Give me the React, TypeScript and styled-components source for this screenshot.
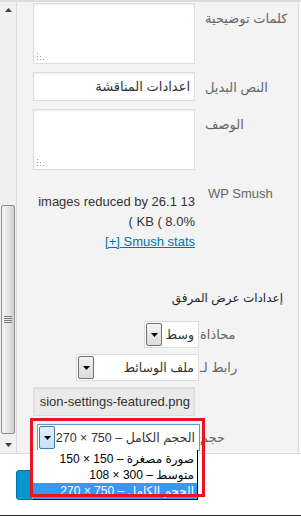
import React from 'react';
import styled, { createGlobalStyle } from 'styled-components';

const GlobalStyle = createGlobalStyle`
  html, body {
    margin: 0;
    padding: 0;
    background: #fff;
  }
  body {
    font-family: "Liberation Sans", "DejaVu Sans", sans-serif;
    font-size: 13px;
    color: #333;
  }
`;

const Frame = styled.div`
  position: relative;
  width: 301px;
  height: 516px;
  box-sizing: border-box;
  border-top: 2px solid #dcdcdc;
  border-bottom: 1px solid #2b2b2b;
  display: flex;
  flex-direction: column;
  overflow: hidden;
  background: #fff;
`;

const Workspace = styled.div`
  display: flex;
  height: 451px;
`;

const ScrollBar = styled.div`
  width: 16px;
  border-right: 1px solid #d9d9d9;
  background: #f0f0f0;
  display: flex;
  flex-direction: column;
  align-items: center;
`;

const ScrollArrow = styled.div`
  height: 16px;
  width: 16px;
  display: flex;
  align-items: center;
  justify-content: center;
`;

const Thumb = styled.div`
  margin-top: 187px;
  width: 14px;
  height: 229px;
  box-sizing: border-box;
  border: 1px solid #8e8f8f;
  border-radius: 2px;
  background: linear-gradient(to right, #f4f4f4 0%, #e6e6e6 50%, #cfcfcf 100%);
  display: flex;
  align-items: center;
  justify-content: center;
`;

const Spacer = styled.div`
  flex: 1;
`;

const Panel = styled.div`
  width: 282px;
  box-sizing: border-box;
  background: #f3f3f3;
  border-right: 1px solid #dcdcdc;
  padding: 1px 8px 0 16px;
  direction: rtl;
`;

const Setting = styled.div<{ $top: number; $center?: boolean }>`
  display: grid;
  grid-template-columns: 95px 162px;
  align-items: ${(p) => (p.$center ? 'center' : 'start')};
  margin-top: ${(p) => p.$top}px;
`;

const Name = styled.div<{ $pad: number; $padTop?: number; $ltr?: boolean }>`
  direction: ${(p) => (p.$ltr ? 'ltr' : 'rtl')};
  text-align: left;
  padding-left: ${(p) => p.$pad}px;
  padding-top: ${(p) => p.$padTop ?? 0}px;
  line-height: 16px;
  color: #666;
  white-space: nowrap;
`;

const TextArea = styled.div`
  position: relative;
  height: 61px;
  box-sizing: border-box;
  background: #fff;
  border: 1px solid #ddd;
  box-shadow: inset 0 1px 2px rgba(0, 0, 0, 0.07);
`;

const Grip = styled.svg`
  position: absolute;
  left: 3px;
  bottom: 2px;
`;

const TextInput = styled.div<{ $readOnly?: boolean }>`
  height: 29px;
  box-sizing: border-box;
  border: 1px solid #ddd;
  background: ${(p) => (p.$readOnly ? '#eaeaea' : '#fff')};
  box-shadow: inset 0 1px 2px rgba(0, 0, 0, 0.07);
  padding: 0 4px 0 8px;
  line-height: 27px;
  color: #333;
  white-space: nowrap;
  overflow: hidden;
`;

const LtrText = styled.span`
  direction: ltr;
  unicode-bidi: embed;
`;

const SmushValue = styled.div`
  padding-top: 14px;
  text-align: right;
  line-height: 20px;
  color: #333;
`;

const Line = styled.div`
  direction: ltr;
  text-align: right;
  white-space: nowrap;
`;

const StatsLink = styled.a`
  color: #0073aa;
  text-decoration: underline;
`;

const SectionTitle = styled.h2`
  margin: 38px 7px 0 0;
  font-size: 12px;
  font-weight: normal;
  line-height: 16px;
  color: #23282d;
`;

const SelectBox = styled.div<{ $width: number; $focused?: boolean }>`
  position: relative;
  justify-self: start;
  margin-inline-start: ${(p) => (p.$focused ? -5 : -4)}px;
  width: ${(p) => p.$width}px;
  height: 27px;
  box-sizing: border-box;
  display: flex;
  align-items: center;
  background: #fff;
  border: 1px solid ${(p) => (p.$focused ? '#5b9dd9' : '#ddd')};
  padding: 1px;
`;

const SelectText = styled.span`
  flex: 1;
  overflow: hidden;
  white-space: nowrap;
  padding-right: 3px;
  font-size: 12.5px;
  color: #333;
`;

const ArrowButton = styled.span<{ $focused?: boolean }>`
  width: 16px;
  height: 23px;
  box-sizing: border-box;
  flex: none;
  display: flex;
  align-items: center;
  justify-content: center;
  border: 1px solid ${(p) => (p.$focused ? '#3c7fb1' : '#707070')};
  border-radius: 2px;
  background: ${(p) =>
    p.$focused
      ? 'linear-gradient(#e5f1fb, #c4e0f7)'
      : 'linear-gradient(#f2f2f2, #dcdcdc)'};
`;

const DropList = styled.div`
  position: absolute;
  top: 100%;
  right: 1px;
  width: 166px;
  box-sizing: border-box;
  padding-top: 1px;
  background: #fff;
  border-left: 1px solid #999;
  border-right: 1px solid #000;
  border-bottom: 1px solid #000;
  z-index: 2;
`;

const Option = styled.div<{ $selected?: boolean }>`
  height: 16px;
  line-height: 16px;
  padding-right: 3px;
  font-size: 12px;
  text-align: right;
  white-space: nowrap;
  background: ${(p) => (p.$selected ? '#3399ff' : 'transparent')};
  color: ${(p) => (p.$selected ? '#fff' : '#000')};
`;

const Gutter = styled.div`
  flex: 1;
  background: #fafafa;
`;

const Footer = styled.div`
  flex: 1;
  border-top: 1px solid #dcdcdc;
  padding: 16px 0 0 16px;
`;

const PrimaryButton = styled.div`
  width: 70px;
  height: 30px;
  box-sizing: border-box;
  background: #0096cf;
  border: 1px solid #0073aa;
  border-radius: 3px;
`;

const Annotation = styled.div`
  position: absolute;
  left: 30px;
  top: 416px;
  width: 175px;
  height: 79px;
  box-sizing: border-box;
  border: 3px solid #e8141f;
  z-index: 3;
  pointer-events: none;
`;

const Triangle: React.FC<{ up?: boolean; color?: string }> = ({ up, color = '#000' }) => (
  <svg width="7" height="4" viewBox="0 0 7 4">
    <path d={up ? 'M0 4 L7 4 L3.5 0 Z' : 'M0 0 L7 0 L3.5 4 Z'} fill={color} />
  </svg>
);

const Select: React.FC<{ width: number; value: string; focused?: boolean; children?: React.ReactNode }> = ({
  width,
  value,
  focused,
  children,
}) => (
  <SelectBox $width={width} $focused={focused}>
    <SelectText>{value}</SelectText>
    <ArrowButton $focused={focused}>
      <Triangle />
    </ArrowButton>
    {children}
  </SelectBox>
);

const ResizeGrip = () => (
  <Grip width="8" height="8" viewBox="0 0 8 8">
    {[
      [1, 1],
      [1, 4],
      [4, 4],
      [1, 7],
      [4, 7],
      [7, 7],
    ].map(([x, y]) => (
      <rect key={`${x}-${y}`} x={x - 1} y={y - 1} width="1" height="1" fill="#9a9a9a" />
    ))}
  </Grip>
);

const sizes = [
  { label: 'صورة مصغرة – 150 × 150' },
  { label: 'متوسط – 300 × 108' },
  { label: 'الحجم الكامل – 750 × 270', selected: true },
];

const App: React.FC = () => {
  return (
    <>
      <GlobalStyle />
      <Frame>
        <Workspace>
          <ScrollBar>
            <ScrollArrow>
              <Triangle up color="#404040" />
            </ScrollArrow>
            <Thumb>
              <svg width="8" height="8" viewBox="0 0 8 8">
                {[0, 2, 4, 6].map((y) => (
                  <rect key={y} x="0" y={y} width="8" height="1" fill="#7a7a7a" />
                ))}
              </svg>
            </Thumb>
            <Spacer />
            <ScrollArrow>
              <Triangle color="#404040" />
            </ScrollArrow>
          </ScrollBar>

          <Panel>
            <Setting $top={0}>
              <Name $pad={10} $padTop={8}>كلمات توضيحية</Name>
              <TextArea>
                <ResizeGrip />
              </TextArea>
            </Setting>

            <Setting $top={8}>
              <Name $pad={10} $padTop={8}>النص البديل</Name>
              <TextInput>اعدادات المناقشة</TextInput>
            </Setting>

            <Setting $top={8}>
              <Name $pad={10} $padTop={8}>الوصف</Name>
              <TextArea>
                <ResizeGrip />
              </TextArea>
            </Setting>

            <Setting $top={8}>
              <Name $pad={13} $padTop={8} $ltr>WP Smush</Name>
              <SmushValue>
                <Line>images reduced by 26.1 13</Line>
                <Line>( KB ( 8.0%</Line>
                <Line>
                  <StatsLink href="#">[+] Smush stats</StatsLink>
                </Line>
              </SmushValue>
            </Setting>

            <SectionTitle>إعدادات عرض المرفق</SectionTitle>

            <Setting $top={15} $center>
              <Name $pad={5}>محاذاة</Name>
              <Select width={55} value="وسط" />
            </Setting>

            <Setting $top={6} $center>
              <Name $pad={5}>رابط لـ</Name>
              <Select width={123} value="ملف الوسائط" />
            </Setting>

            <Setting $top={6}>
              <span />
              <TextInput $readOnly>
                <LtrText>sion-settings-featured.png</LtrText>
              </TextInput>
            </Setting>

            <Setting $top={8} $center>
              <Name $pad={5}>حجم</Name>
              <Select width={163} value="الحجم الكامل – 750 × 270" focused>
                <DropList>
                  {sizes.map((s) => (
                    <Option key={s.label} $selected={s.selected}>
                      {s.label}
                    </Option>
                  ))}
                </DropList>
              </Select>
            </Setting>
          </Panel>
          <Gutter />
        </Workspace>

        <Footer>
          <PrimaryButton />
        </Footer>

        <Annotation />
      </Frame>
    </>
  );
};

export default App;
